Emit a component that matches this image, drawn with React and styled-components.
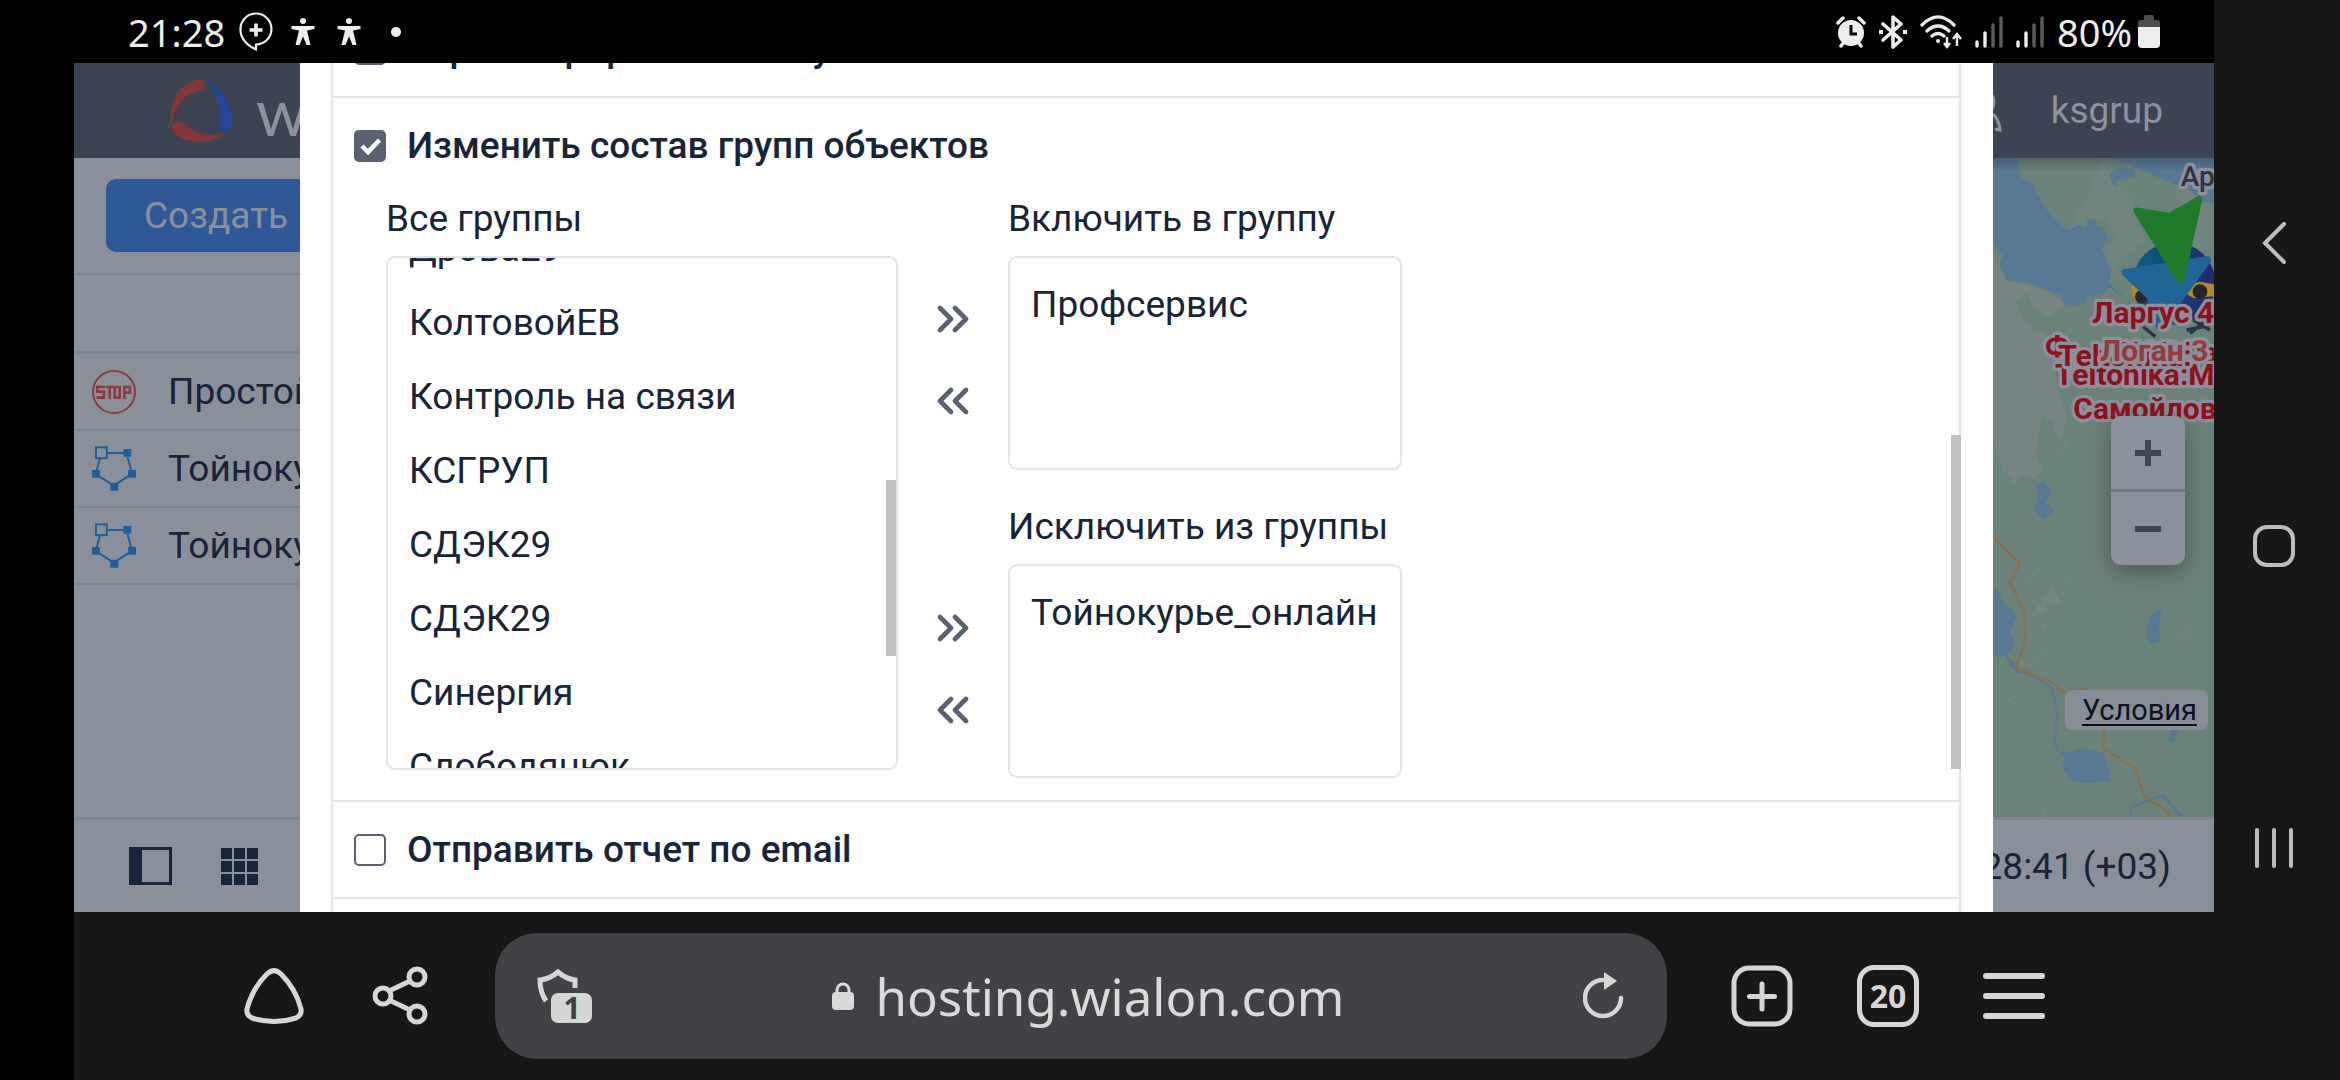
import React, { useLayoutEffect, useRef, useState } from "react";
import styled, { createGlobalStyle } from "styled-components";

const ink = "#18243a";
const line = "#e5e5e5";
const dimLine = "#7f858e";
const dimSurface = "#8a9099";
const steel = "#5a6170";

const GlobalStyle = createGlobalStyle`
  * {
    box-sizing: border-box;
  }
  body {
    margin: 0;
    background: #000;
    font-family: Roboto, "Liberation Sans", sans-serif;
    font-size: 37px;
    color: ${ink};
  }
  button {
    padding: 0;
    border: 0;
    background: none;
    font: inherit;
    color: inherit;
    cursor: pointer;
  }
  svg {
    display: block;
    flex: none;
  }
`;

const groups = [
  "Дрова29",
  "КолтовойЕВ",
  "Контроль на связи",
  "КСГРУП",
  "СДЭК29",
  "СДЭК29",
  "Синергия",
  "Слободянюк"
];

/* ---------- phone shell ---------- */

const Phone = styled.div`
  display: flex;
  height: 100vh;
  padding-left: 74px;
  overflow: hidden;
`;

const Screen = styled.div`
  display: flex;
  flex-direction: column;
  flex: 1;
  min-width: 0;
`;

const StatusBar = styled.header`
  display: flex;
  justify-content: space-between;
  height: 63px;
  flex: none;
  padding: 0 54px;
  background: #000;
  color: #ededed;
  font-family: "Noto Sans", sans-serif;
  font-size: 38px;
`;

const StatusGroup = styled.div`
  display: flex;
  align-items: center;
  gap: ${props => props.$gap}px;
`;

const BottomBar = styled.nav`
  display: flex;
  align-items: center;
  justify-content: space-between;
  gap: 64px;
  height: 168px;
  flex: none;
  padding: 0 169px;
  background: #171717;
  color: #d6d6d6;
`;

const AddressBar = styled.div`
  display: flex;
  align-items: center;
  justify-content: space-between;
  flex: 1;
  height: 126px;
  padding: 0 42px;
  border-radius: 42px;
  background: #424146;
`;

const Address = styled.a`
  display: flex;
  align-items: center;
  gap: 22px;
  color: #dadada;
  font-family: "Noto Sans", sans-serif;
  font-size: 51px;
  line-height: 60px;
  text-decoration: none;
`;

const TabsButton = styled.button`
  width: 62px;
  height: 62px;
  border: 5px solid #d6d6d6;
  border-radius: 17px;
  font-family: "Noto Sans", sans-serif;
  font-size: 32px;
  font-weight: 700;
  line-height: 48px;
`;

const SystemNav = styled.nav`
  display: flex;
  flex-direction: column;
  align-items: center;
  justify-content: space-between;
  width: 126px;
  flex: none;
  padding: 222px 6px 212px 0;
  background: #171717;
  color: #bdbdbd;
`;

/* ---------- page behind the dialog ---------- */

const Page = styled.main`
  position: relative;
  display: flex;
  flex-direction: column;
  flex: 1;
  min-height: 0;
  background: ${dimSurface};
`;

const TopBar = styled.div`
  display: flex;
  align-items: center;
  justify-content: space-between;
  height: 95px;
  flex: none;
  padding: 0 51px 0 96px;
  background: #3c4453;
  color: #8d929c;
`;

const Brand = styled.div`
  display: flex;
  align-items: center;
  gap: 24px;
  font-family: Lato, sans-serif;
  font-size: 66px;
  line-height: 80px;
`;

const User = styled.div`
  display: flex;
  align-items: center;
  gap: 47px;
`;

const Workspace = styled.div`
  display: flex;
  flex: 1;
  min-height: 0;
`;

const Sidebar = styled.aside`
  width: 40%;
  flex: none;
`;

const CreateArea = styled.div`
  padding: 21px 32px;
  border-bottom: 2px solid ${dimLine};
`;

const CreateButton = styled.button`
  width: 100%;
  height: 73px;
  padding-left: 38px;
  border-radius: 10px;
  background: #2f5899;
  color: ${dimSurface};
  text-align: left;
`;

const FilterArea = styled.div`
  height: 79px;
  border-bottom: 3px solid ${dimLine};
`;

const NoticeRow = styled.div`
  display: flex;
  align-items: center;
  gap: 32px;
  height: 77px;
  padding-left: 18px;
  border-bottom: 2px solid ${dimLine};
`;

const MapArea = styled.div`
  position: relative;
  display: flex;
  justify-content: flex-end;
  flex: 1;
  overflow: hidden;
  background: #6b827a;
`;

const ZoomControl = styled.div`
  position: absolute;
  top: 258px;
  right: 29px;
  display: flex;
  flex-direction: column;
  gap: 3px;
  border-radius: 10px;
  overflow: hidden;
  background: #747a80;
  box-shadow: 0 6px 22px rgba(40, 50, 50, 0.5);
`;

const ZoomButton = styled.button`
  display: flex;
  align-items: center;
  justify-content: center;
  width: 74px;
  height: 73px;
  background: #8b919c;
  color: #3c4655;
`;

const Terms = styled.a`
  position: absolute;
  right: 6px;
  bottom: 87px;
  padding: 0 11px 0 17px;
  border-radius: 7px;
  background: rgba(138, 144, 155, 0.88);
  color: #0b121c;
  font-size: 29px;
  line-height: 40px;
  text-underline-offset: 4px;
`;

const BottomTools = styled.div`
  display: flex;
  align-items: center;
  justify-content: space-between;
  height: 95px;
  flex: none;
  padding: 0 43px 0 55px;
  border-top: 3px solid ${dimLine};
`;

const ToolButtons = styled.div`
  display: flex;
  gap: 49px;
`;

/* ---------- dialog ---------- */

const Overlay = styled.div`
  position: absolute;
  inset: 0;
  padding: 0 221px 0 226px;
`;

const Dialog = styled.section`
  position: relative;
  height: 100%;
  padding: 0 32px 0 31px;
  background: #fff;
`;

const Actions = styled.div`
  height: 100%;
  overflow: hidden;
  border: solid ${line};
  border-width: 0 2px;
`;

const Action = styled.div`
  border-bottom: 2px solid ${line};
`;

const ActionTitle = styled.label`
  display: flex;
  align-items: center;
  gap: 21px;
  height: 95px;
  padding-left: 21px;
  font-weight: 500;
`;

const Check = styled.input`
  appearance: none;
  width: 32px;
  height: 32px;
  flex: none;
  margin: 0;
  border: 2px solid ${steel};
  border-radius: 5px;
  background: #fff;

  &:checked {
    background: ${steel};
  }
  &:checked + svg {
    display: block;
  }
`;

const CheckBox = styled.span`
  display: grid;
  > * {
    grid-area: 1 / 1;
  }
  > svg {
    display: none;
  }
`;

const Transfer = styled.div`
  display: grid;
  grid-template-columns: 512px 110px 394px;
  padding: 0 0 22px 53px;
`;

const Column = styled.div`
  display: flex;
  flex-direction: column;
`;

const Caption = styled.div`
  height: 52px;
  margin-bottom: 11px;
  line-height: 52px;
`;

const Arrows = styled.div`
  display: flex;
  flex-direction: column;
  align-items: center;
  padding-top: 85px;
`;

const ArrowPair = styled.div`
  display: flex;
  flex-direction: column;
  margin-bottom: 145px;

  &:last-child {
    margin-bottom: 0;
  }
`;

const ArrowButton = styled.button`
  display: flex;
  align-items: center;
  justify-content: center;
  width: 82px;
  height: 82px;
  color: ${steel};
`;

const ListFrame = styled.div`
  position: relative;
`;

const List = styled.ul`
  height: ${props => (props.$tall ? 514 : 214)}px;
  margin: 0 0 ${props => (props.$spaced ? 31 : 0)}px;
  padding: 10px 0;
  border: 2px solid ${line};
  border-radius: 9px;
  overflow: hidden;
  list-style: none;
`;

const ListItem = styled.li`
  height: 74px;
  padding-left: 21px;
  line-height: 74px;
`;

const Thumb = styled.i`
  position: absolute;
  top: ${props => props.$top}px;
  right: ${props => props.$right}px;
  width: 10px;
  height: ${props => props.$size}px;
  background: #c1c1c1;
`;

/* ---------- icons ---------- */

const ChatPlus = () => (
  <svg width="34" height="40" viewBox="0 0 34 40" fill="none" stroke="currentColor">
    <path d="M17 32.5v5C8 34 1.5 26 1.5 18A15.5 15.5 0 1 1 17 32.5z" strokeWidth="2.2" />
    <path d="M17 11.5v13M10.5 18h13" strokeWidth="3.6" />
  </svg>
);

const Person = () => (
  <svg width="32" height="28" viewBox="-4 0 32 28" fill="currentColor">
    <circle cx="12" cy="3" r="3" />
    <path d="M.5 8h23v3L16 12.500 19.500 27h-4L12 18.500 8.500 27h-4L8 12.500.5 11z" />
  </svg>
);

const Dot = () => (
  <svg width="34" height="10" viewBox="-12 0 34 10" fill="currentColor">
    <circle cx="5" cy="5" r="5" />
  </svg>
);

const Alarm = () => (
  <svg width="30" height="32" viewBox="0 0 30 32" fill="none" stroke="currentColor">
    <circle cx="15" cy="17" r="13" fill="currentColor" stroke="none" />
    <path d="M2 7l5-5M28 7l-5-5M5 30l3-4M25 30l-3-4" strokeWidth="3.5" strokeLinecap="round" />
    <path d="M15 9v9h6" stroke="#000" strokeWidth="3" />
  </svg>
);

const Bluetooth = () => (
  <svg width="28" height="34" viewBox="0 0 28 34" fill="none" stroke="currentColor" strokeWidth="3.6">
    <path d="M4 9l18 16-8 7V2l8 7L4 25" strokeLinejoin="round" strokeLinecap="round" />
    <path d="M0 17h4M24 17h4" strokeWidth="4" />
  </svg>
);

const Wifi = () => (
  <svg width="42" height="34" viewBox="0 0 42 34" fill="none" stroke="currentColor" strokeWidth="3.2">
    <path d="M2 10q16-16 32 0M7 16q11-10 22 0M12 21q6-5 12 0" strokeLinecap="round" />
    <circle cx="18" cy="26" r="2" fill="currentColor" stroke="none" />
    <path d="M27 22v9M24 28l3 4 3-4M37 31V21M33 24l4-5 4 5" strokeWidth="2.4" />
  </svg>
);

const Signal = () => (
  <svg width="28" height="32" viewBox="0 0 28 32" strokeWidth="3.4" strokeLinecap="round">
    <path d="M2 26v4M10 17v13" stroke="#ededed" />
    <path d="M18 9v21M26 2v28" stroke="#5c5c5c" />
  </svg>
);

const Battery = () => (
  <svg width="22" height="33" viewBox="0 0 22 33">
    <path d="M6 2q0-2 2-2h6q2 0 2 2v3h3q3 0 3 3v5H0V8q0-3 3-3h3z" fill="#4d4d4d" />
    <path d="M0 12h22v17q0 4-4 4H4q-4 0-4-4z" fill="#ededed" />
  </svg>
);

const Home = () => (
  <svg width="62" height="56" viewBox="-1 0 62 56" fill="none" stroke="currentColor" strokeWidth="5">
    <path d="M23 6q7-7 14 0 15 15 20 35 1 6-5 9-22 7-44 0-6-3-5-9Q8 21 23 6z" />
  </svg>
);

const Share = () => (
  <svg width="62" height="60" viewBox="-3 0 62 60" fill="none" stroke="currentColor" strokeWidth="5">
    <circle cx="11" cy="30" r="8" />
    <circle cx="45" cy="11" r="8" />
    <circle cx="45" cy="48" r="8" />
    <path d="M17 25l21-10M17 34l21 10" />
  </svg>
);

const Shield = () => (
  <svg width="56" height="56" viewBox="0 0 56 56">
    <path
      d="M9 33C4 26 3 20 3 12q10-1 18-8 8 7 17 8v8"
      fill="none"
      stroke="#d6d6d6"
      strokeWidth="5"
    />
    <rect x="14" y="25" width="41" height="30" rx="7" fill="#d6d6d6" />
    <text x="35" y="51" fill="#424146" fontSize="30" fontWeight="700" fontFamily="Noto Sans, sans-serif" textAnchor="middle">
      1
    </text>
  </svg>
);

const Lock = () => (
  <svg width="22" height="28" viewBox="0 0 22 28">
    <rect y="10" width="22" height="18" rx="4" fill="currentColor" />
    <path d="M5 12V8a6 6 0 0 1 12 0v4" fill="none" stroke="currentColor" strokeWidth="3" />
  </svg>
);

const Reload = () => (
  <svg width="42" height="50" viewBox="0 0 42 50" fill="none">
    <path d="M38 27a18 18 0 1 1-18-18" stroke="currentColor" strokeWidth="4.5" strokeLinecap="round" />
    <path d="M21 1l13 9-13 9z" fill="currentColor" />
  </svg>
);

const NewTab = () => (
  <svg width="62" height="62" viewBox="0 0 62 62" fill="none" stroke="currentColor" strokeWidth="5">
    <rect x="3" y="3" width="56" height="56" rx="15" />
    <path d="M31 19v25M18.500 31.500h25" strokeLinecap="round" />
  </svg>
);

const Menu = () => (
  <svg width="62" height="46" viewBox="0 0 62 46" stroke="currentColor" strokeWidth="6" strokeLinecap="round">
    <path d="M3 3h56M3 23h56M3 43h56" />
  </svg>
);

const BackIcon = () => (
  <svg width="24" height="42" viewBox="0 0 24 42" fill="none" stroke="currentColor" strokeWidth="4" strokeLinecap="round">
    <path d="M22 2L3 21l19 19" />
  </svg>
);

const HomeKey = () => (
  <svg width="42" height="42" viewBox="0 0 42 42" fill="none" stroke="currentColor" strokeWidth="4">
    <rect x="2" y="2" width="38" height="38" rx="12" />
  </svg>
);

const Recents = () => (
  <svg width="38" height="40" viewBox="0 0 38 40" stroke="currentColor" strokeWidth="4" strokeLinecap="round">
    <path d="M2 2v36M19 2v36M36 2v36" />
  </svg>
);

const BrandMark = () => (
  <svg width="62" height="64" viewBox="0 0 186 192">
    <path d="M2 140Q-6 30 78 3q22-6 28 12-2 18-24 22Q18 50 5 138z" fill="#853538" />
    <path d="M104 0q78 38 80 126-2 32-22 32-18-4-14-28 12-70-44-130z" fill="#244699" />
    <path d="M172 160q-60 42-130 22Q-2 164 7 140q10-20 34-6 54 50 131 26z" fill="#853538" />
  </svg>
);

const UserIcon = () => (
  <svg width="42" height="46" viewBox="0 0 42 46" fill="none" stroke="currentColor" strokeWidth="3">
    <ellipse cx="21" cy="14" rx="11" ry="12" />
    <path d="M2 44q2-16 12-19M28 25q8 2 10 17l-5-1" />
  </svg>
);

const StopSign = () => (
  <svg width="44" height="44" viewBox="0 0 132 132" fill="none" stroke="#8e3a3e">
    <circle cx="66" cy="66" r="63" strokeWidth="6" />
    <path d="M40 51H16v14h20v18H14M42 51h22M53 51v36M68 51h15v32H68zM97 87V51h17v17H97" strokeWidth="8" />
  </svg>
);

const Geofence = () => (
  <svg width="44" height="46" viewBox="0 0 134 138" fill="none" stroke="#1f5f98">
    <path d="M46 20h52M108 32l12 44M112 90l-40 26M60 116L20 90M14 74l10-36" strokeWidth="6" />
    <rect x="12" y="3" width="33" height="33" strokeWidth="6" />
    <path d="M96 8h24v24H96zM110 72h24v24h-24zM56 111h24v24H56zM0 72h24v24H0z" fill="#1f5f98" stroke="none" />
  </svg>
);

const PanelIcon = () => (
  <svg width="43" height="38" viewBox="0 0 43 38">
    <path d="M0 0h43v38H0zM13 3v32h27V3z" fill={ink} fillRule="evenodd" />
  </svg>
);

const GridIcon = () => (
  <svg width="37" height="37" viewBox="0 0 37 37" fill={ink}>
    {[0, 13, 26].map(y => (
      <path key={y} d={`M0 ${y}h11v11H0zM13 ${y}h11v11H13zM26 ${y}h11v11H26z`} />
    ))}
  </svg>
);

const Tick = () => (
  <svg width="32" height="32" viewBox="0 0 32 32" fill="none" stroke="#fff" strokeWidth="4.5">
    <path d="M8 16l6 6L25.500 10" />
  </svg>
);

const Chevrons = ({ back }) => (
  <svg width="32" height="28" viewBox="0 0 32 28" fill="none" stroke="currentColor" strokeWidth="4.6" strokeLinecap="round" strokeLinejoin="round">
    <path d={back ? "M14 3L3 14l11 11M29 3L18 14l11 11" : "M3 3l11 11L3 25M18 3l11 11-11 11"} />
  </svg>
);

const Plus = () => (
  <svg width="26" height="26" viewBox="0 0 26 26" stroke="currentColor" strokeWidth="6">
    <path d="M0 13h26M13 0v26" />
  </svg>
);

const Minus = () => (
  <svg width="26" height="26" viewBox="0 0 26 26" stroke="currentColor" strokeWidth="6">
    <path d="M0 13h26" />
  </svg>
);

const MapLabel = styled.text`
  font: 700 90px Roboto, sans-serif;
  fill: ${props => props.$fill || "#8f111d"};
  stroke: #8d8f9c;
  stroke-width: 20px;
  stroke-linejoin: round;
  paint-order: stroke;
`;

const PlaceLabel = styled(MapLabel)`
  font-weight: 500;
  font-size: 84px;
`;

const MapDrawing = () => (
  <svg width="221" height="659" viewBox="99 114 663 1977">
    <defs>
      <linearGradient id="globe" x1="0" x2="1">
        <stop offset="0" stopColor="#0e6078" />
        <stop offset="0.5" stopColor="#15457c" />
        <stop offset="1" stopColor="#2a2468" />
      </linearGradient>
      <linearGradient id="edge" x1="0" x2="0" y1="0" y2="1">
        <stop offset="0" stopColor="#2c3848" stopOpacity="0.4" />
        <stop offset="1" stopColor="#2c3848" stopOpacity="0" />
      </linearGradient>
    </defs>
    <g fill="#768583">
      <path d="M99 395l19 40 22 45 130 35 42 37-42 38-40-20-30-50-35 20 20 50 30 35 35 15 30 50 10 110 30 80-15 75-20-10-10-45-30-15-10 65-7 60 20 40-23 25-35-7-25 22-35-40-31-80z" />
      <path d="M325 333l30-60 25-40 30-70 20-49h30l-5 60 60 60 40 130-80 60-20 60-15-90 25-40-27-60z" opacity="0.5" />
      <path d="M640 200l50 12 45 36 27 2v140l-62-10-20-80z" opacity="0.6" />
      <path d="M213 1490l40-60 27-30 24 53-46-2v25zM235 1508l22 8 1 14zM175 1620l18-10-8 50z" />
      <path d="M210 1380l28-40M305 1395l28-24M405 1340l25-36M660 1560l45-55M210 1640l45-40M140 1745l32-18M300 1000l20-40M245 2090l12-30" stroke="#768583" strokeWidth="4" />
    </g>
    <g fill="#577994">
      <path d="M99 114h76l8 61 35 17 27 58 35 45 45 38 30-18 23 7 5-22 22-5 3 20 22 10 15 30-20 30 15 35 12 30-4 50-18 20-48 10-7 15-30 13-33-6-7-24-35-13-70-30-60-5-22-45 10-30-29-32z" />
      <path d="M450 114h312v136l-27-2-45-36-170-72-20-15z" />
      <path d="M448 160l37-18 35 8 7 18-52 14-7 18-13-10z" />
      <path d="M228 1095l22-15 15 25h11l-18 45 12 10 13 12-35 28-26-35 13-25z" />
      <path d="M99 1400l16 12 15 40 25 14 15 29-23 40 16 30-6 25-35 22-23-4z" />
      <path d="M298 1895l27 5 35-16 65 12 15 26 10 60-75 8-45-12-24-40 9-20z" />
      <path d="M568 1490l22-20 18-3-11 41 3 54-27 13-15-25z" />
      <path d="M600 1730l30 15 28 85-18 38-16-6 16-52z" />
    </g>
    <path d="M135 1602l38 55 32 1 70 46 17 72-8 92 14 32M510 2092l5-32 93-33 60 65M445 495l40 32" fill="none" stroke="#577994" strokeWidth="7" />
    <path d="M99 1250l81 79-30 56 42 90 4 85-28 84 110 44 29 30 63-12 40 16 25 38-5 125 97 61 26 86 57 32 27 28" fill="none" stroke="#8a7048" strokeWidth="6" />
    <rect x="99" y="114" width="663" height="40" fill="url(#edge)" />

    <PlaceLabel x="662" y="198" $fill="#2c3543">Архангельск</PlaceLabel>
    <circle cx="642" cy="490" r="124" fill="url(#globe)" />
    <path d="M516 495l40 8 20 30-30 12-30-15zM680 495l40-10 42 8v36l-62 5-24-14z" fill="#b08a22" />
    <circle cx="545" cy="530" r="20" fill="#25272c" />
    <circle cx="720" cy="515" r="22" fill="#25272c" />
    <path d="M550 620l36 30M680 630l70-14M700 600l50 30M690 640l50-40" stroke="#2c3543" strokeWidth="10" />
    <path d="M490 448l254-40q12 4 8 18L665 545l-56 78q-14 10-22-2l-24-84-76-72q-6-10 3-17z" fill="#1f6697" />
    <path d="M526 262l102 16 86-49q14-2 12 15l-54 240q-10 16-20 2L522 278q-6-10 4-16z" fill="#1f7a2a" />

    <MapLabel x="255" y="712">Ф</MapLabel>
    <MapLabel x="480" y="730">КАР Та</MapLabel>
    <MapLabel x="285" y="794">Teltonika:М</MapLabel>
    <MapLabel x="295" y="738">Teltonika:</MapLabel>
    <MapLabel x="420" y="722" $fill="#96393f">Логан 3</MapLabel>
    <MapLabel x="397" y="608">Ларгус 4</MapLabel>
    <MapLabel x="340" y="896">Самойлов</MapLabel>
  </svg>
);

/* ---------- parts ---------- */

const GroupList = ({ items, label, tall, spaced, scroll = 0 }) => {
  const ref = useRef(null);

  useLayoutEffect(() => {
    ref.current.scrollTop = scroll;
  }, [scroll]);

  return (
    <List ref={ref} aria-label={label} $tall={tall} $spaced={spaced}>
      {items.map((item, i) => (
        <ListItem key={i}>{item}</ListItem>
      ))}
    </List>
  );
};

const ActionHead = ({ title, initial = false }) => {
  const [checked, set] = useState(initial);
  return (
    <ActionTitle>
      <CheckBox>
        <Check type="checkbox" checked={checked} onChange={() => set(c => !c)} />
        <Tick />
      </CheckBox>
      {title}
    </ActionTitle>
  );
};

const TransferArrows = () => (
  <ArrowPair>
    <ArrowButton aria-label="Добавить">
      <Chevrons />
    </ArrowButton>
    <ArrowButton aria-label="Убрать">
      <Chevrons back />
    </ArrowButton>
  </ArrowPair>
);

const ActionsDialog = () => {
  const ref = useRef(null);

  useLayoutEffect(() => {
    ref.current.scrollTop = 62;
  }, []);

  return (
    <Overlay>
      <Dialog role="dialog">
        <Actions ref={ref}>
          <Action>
            <ActionHead title="Зарегистрировать статус" initial />
          </Action>
          <Action>
            <ActionHead title="Изменить состав групп объектов" initial />
            <Transfer>
              <Column>
                <Caption>Все группы</Caption>
                <ListFrame>
                  <GroupList items={groups} label="Все группы" tall scroll={56} />
                  <Thumb $top={224} $right={2} $size={176} />
                </ListFrame>
              </Column>
              <Arrows>
                <TransferArrows />
                <TransferArrows />
              </Arrows>
              <Column>
                <Caption>Включить в группу</Caption>
                <GroupList items={["Профсервис"]} label="Включить в группу" spaced />
                <Caption>Исключить из группы</Caption>
                <GroupList items={["Тойнокурье_онлайн"]} label="Исключить из группы" />
              </Column>
            </Transfer>
          </Action>
          <Action>
            <ActionHead title="Отправить отчет по email" />
          </Action>
          <Action>
            <ActionHead title="Создать поездку" />
          </Action>
        </Actions>
        <Thumb $top={372} $right={32} $size={334} />
      </Dialog>
    </Overlay>
  );
};

const App = () => (
  <>
    <GlobalStyle />
    <Phone>
      <Screen>
        <StatusBar>
          <StatusGroup $gap={14}>
            <span>21:28</span>
            <ChatPlus />
            <Person />
            <Person />
            <Dot />
          </StatusGroup>
          <StatusGroup $gap={13}>
            <Alarm />
            <Bluetooth />
            <Wifi />
            <Signal />
            <Signal />
            <StatusGroup $gap={6}>
              <span>80%</span>
              <Battery />
            </StatusGroup>
          </StatusGroup>
        </StatusBar>

        <Page>
          <TopBar>
            <Brand>
              <BrandMark />
              wialon
            </Brand>
            <User>
              <UserIcon />
              ksgrup
            </User>
          </TopBar>
          <Workspace>
            <Sidebar>
              <CreateArea>
                <CreateButton>Создать</CreateButton>
              </CreateArea>
              <FilterArea />
              <NoticeRow>
                <StopSign />
                Простой
              </NoticeRow>
              <NoticeRow>
                <Geofence />
                Тойнокурье
              </NoticeRow>
              <NoticeRow>
                <Geofence />
                Тойнокурье
              </NoticeRow>
            </Sidebar>
            <MapArea>
              <MapDrawing />
              <ZoomControl>
                <ZoomButton aria-label="Приблизить">
                  <Plus />
                </ZoomButton>
                <ZoomButton aria-label="Отдалить">
                  <Minus />
                </ZoomButton>
              </ZoomControl>
              <Terms href="#terms">Условия</Terms>
            </MapArea>
          </Workspace>
          <BottomTools>
            <ToolButtons>
              <button aria-label="Панель">
                <PanelIcon />
              </button>
              <button aria-label="Приложения">
                <GridIcon />
              </button>
            </ToolButtons>
            <span>21:28:41 (+03)</span>
          </BottomTools>
          <ActionsDialog />
        </Page>

        <BottomBar>
          <button aria-label="Домой">
            <Home />
          </button>
          <button aria-label="Поделиться">
            <Share />
          </button>
          <AddressBar>
            <button aria-label="Защита">
              <Shield />
            </button>
            <Address href="#address">
              <Lock />
              hosting.wialon.com
            </Address>
            <button aria-label="Обновить">
              <Reload />
            </button>
          </AddressBar>
          <button aria-label="Новая вкладка">
            <NewTab />
          </button>
          <TabsButton>20</TabsButton>
          <button aria-label="Меню">
            <Menu />
          </button>
        </BottomBar>
      </Screen>

      <SystemNav>
        <button aria-label="Назад">
          <BackIcon />
        </button>
        <button aria-label="Главный экран">
          <HomeKey />
        </button>
        <button aria-label="Недавние">
          <Recents />
        </button>
      </SystemNav>
    </Phone>
  </>
);

export default App;
